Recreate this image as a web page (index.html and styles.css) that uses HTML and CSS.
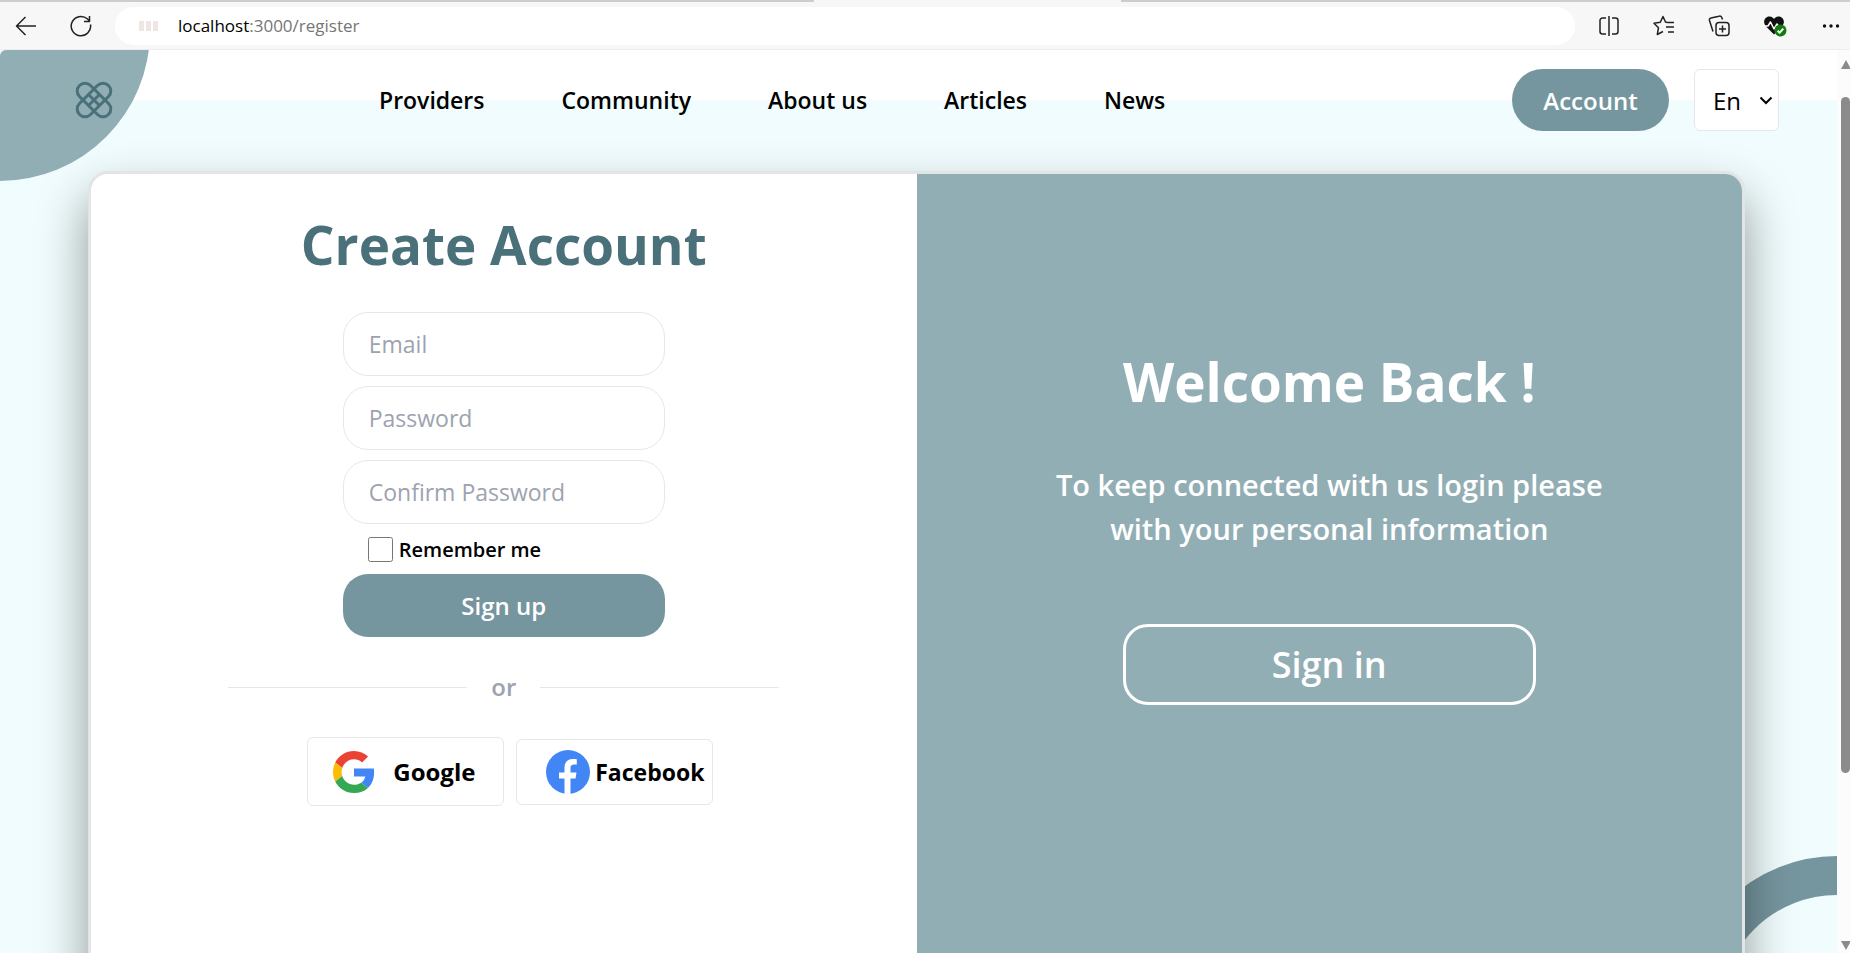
FILE: index.html
```html
<!DOCTYPE html>
<html lang="en">
<head>
  <meta charset="UTF-8">
  <meta name="viewport" content="width=device-width, initial-scale=1.0">
  <title>Register</title>
  <link rel="stylesheet" href="styles.css">
</head>
<body>
  <!-- browser bar -->
  <div class="toolbar">
    <div class="tab"></div>
    <button class="tool" aria-label="Back">
      <svg width="22" height="22" viewBox="0 0 22 22"><path d="M21 11H1.500M10.500 2L1.500 11l9 9"/></svg>
    </button>
    <button class="tool" aria-label="Reload">
      <svg width="22" height="22" viewBox="0 0 22 22"><path d="M20.500 9.500a9.700 9.700 0 1 1-3.200-5.700L19.500 6M19.500 1v5.500h-5.500"/></svg>
    </button>
    <div class="address">
      <span class="favicon" aria-hidden="true"><i></i><i></i><i></i></span>
      <span class="url">localhost<span class="path">:3000/register</span></span>
    </div>
    <div class="tools">
      <button class="tool" aria-label="Split screen">
        <svg width="22" height="22" viewBox="0 0 22 22"><path d="M8 3H4.500A2.500 2.500 0 0 0 2 5.500v11A2.500 2.500 0 0 0 4.500 19H8M14 3h3.500A2.500 2.500 0 0 1 20 5.500v11a2.500 2.500 0 0 1-2.500 2.500H14M11 1v20"/></svg>
      </button>
      <button class="tool" aria-label="Favorites">
        <svg width="22" height="22" viewBox="0 0 22 22"><path d="M14.500 7.500L12.500 7 10 1.500 7.300 7.200 1 8.200l4.500 4.500L4.300 19.500 10 16.500M14.500 7.500H21M13 12h8M15 17h6"/></svg>
      </button>
      <button class="tool" aria-label="Collections">
        <svg width="22" height="22" viewBox="0 0 22 22"><rect x="8" y="7.500" width="13" height="13" rx="3"/><path d="M14.500 10.500v7M11 14h7M5 16.500L1.500 5.500Q1 3.500 3 3L11 1.200q2-.5 2.800 1.300l.7 2"/></svg>
      </button>
      <button class="tool" aria-label="Browser essentials">
        <svg width="24" height="22" viewBox="0 0 24 22"><path class="solid" d="M11 19.500L3 11.500C-1.500 6 3 1 6.500 1.500 9 1.500 10.500 3 11 4c.5-1 2-2.500 4.500-2.500C19 1 23.500 6 19 11.500z"/><path class="pulse" d="M0 11h5l2.500-4 3.500 7 3-5 2 3h5"/><circle class="ok" cx="17.500" cy="15.500" r="6"/><path class="tick" d="M14.700 15.700l2 2 3.600-4"/></svg>
      </button>
      <button class="tool" aria-label="Settings and more">
        <svg width="22" height="22" viewBox="0 0 22 22"><g class="solid"><circle cx="4.500" cy="11" r="1.700"/><circle cx="11" cy="11" r="1.700"/><circle cx="17.500" cy="11" r="1.700"/></g></svg>
      </button>
    </div>
  </div>

  <div class="window">
    <div class="page">
      <div class="circle"></div>
      <div class="ring"></div>

      <header class="header">
        <a class="logo" href="#" aria-label="Home">
          <svg width="38" height="38" viewBox="0 0 38 38">
            <rect x="11.200" y="-1.500" width="15.600" height="41" rx="7.800" transform="rotate(45 19 19)"/>
            <rect x="11.200" y="-1.500" width="15.600" height="41" rx="7.800" transform="rotate(-45 19 19)"/>
            <path d="M13.500 13.500l11 11M24.500 13.500l-11 11"/>
          </svg>
        </a>
        <nav class="nav">
          <a href="#">Providers</a>
          <a href="#">Community</a>
          <a href="#">About us</a>
          <a href="#">Articles</a>
          <a href="#">News</a>
        </nav>
        <div class="actions">
          <button class="account">Account</button>
          <div class="language">
            <select aria-label="Language">
              <option>En</option>
              <option>Ar</option>
            </select>
            <svg width="14" height="9" viewBox="0 0 14 9"><path d="M1.500 1.500L7 7l5.500-5.500"/></svg>
          </div>
        </div>
      </header>

      <main class="card">
        <section class="signup">
          <h1>Create Account</h1>
          <form class="form">
            <input class="field" type="email" placeholder="Email" aria-label="Email">
            <input class="field" type="password" placeholder="Password" aria-label="Password">
            <input class="field" type="password" placeholder="Confirm Password" aria-label="Confirm Password">
            <div class="remember">
              <input type="checkbox" id="remember">
              <label for="remember">Remember me</label>
            </div>
            <button class="submit" type="button">Sign up</button>
          </form>
          <div class="divider">or</div>
          <div class="social">
            <button class="google">
              <svg width="42" height="42" viewBox="0 0 48 48">
                <path fill="#ea4335" d="M24 9.500c3.540 0 6.710 1.220 9.210 3.600l6.850-6.850C35.900 2.380 30.470 0 24 0 14.620 0 6.510 5.380 2.560 13.220l7.980 6.190C12.430 13.720 17.740 9.500 24 9.500z"/>
                <path fill="#4285f4" d="M46.980 24.550c0-1.570-.15-3.090-.38-4.550H24v9.020h12.940c-.58 2.960-2.260 5.480-4.780 7.180l7.730 6c4.510-4.180 7.090-10.360 7.090-17.650z"/>
                <path fill="#fbbc05" d="M10.530 28.590c-.48-1.450-.76-2.990-.76-4.590s.27-3.140.76-4.590l-7.980-6.190C.92 16.460 0 20.120 0 24c0 3.880.92 7.540 2.560 10.780l7.970-6.190z"/>
                <path fill="#34a853" d="M24 48c6.480 0 11.930-2.130 15.890-5.810l-7.730-6c-2.150 1.450-4.920 2.300-8.160 2.300-6.260 0-11.570-4.220-13.470-9.910l-7.980 6.190C6.510 42.620 14.620 48 24 48z"/>
              </svg>
              Google
            </button>
            <button class="facebook">
              <svg width="44" height="44" viewBox="0 0 44 44">
                <circle cx="22" cy="22" r="22" fill="#4285f4"/>
                <path fill="#fff" d="M18.500 44V28.500H13V22.500h5.500v-4.500c0-6 3.200-9 8.300-9 1.600 0 3 .1 4 .3v5.200h-2.600c-2.800 0-3.700 1.400-3.700 3.500v4.500h6l-1 6h-5V44z"/>
              </svg>
              Facebook
            </button>
          </div>
        </section>
        <section class="welcome">
          <h2>Welcome Back !</h2>
          <p>To keep connected with us login please with your personal information</p>
          <button class="signin">Sign in</button>
        </section>
      </main>
    </div>

    <div class="scrollbar" aria-hidden="true">
      <div class="arrow-up"></div>
      <div class="thumb"></div>
      <div class="arrow-down"></div>
    </div>
  </div>
</body>
</html>
```
FILE: styles.css
```css
* {
  box-sizing: border-box;
}

body {
  margin: 0;
  height: 100vh;
  display: flex;
  flex-direction: column;
  overflow: hidden;
  background: #f7f7f7;
  color: #000;
  font-family: "Segoe UI", "Open Sans", "Noto Sans", sans-serif;
  font-size: 24px;
}

button, input, select {
  font-family: inherit;
  font-size: inherit;
  color: inherit;
}

button {
  padding: 0;
  border: none;
  background: none;
  cursor: pointer;
}

a {
  color: inherit;
  text-decoration: none;
}

/* browser bar */
.toolbar {
  position: relative;
  flex: none;
  display: flex;
  align-items: center;
  height: 50px;
  padding: 0 8px 0 15px;
  gap: 33px;
  border-top: 2px solid #cdcdcd;
  border-bottom: 1px solid #ededed;
}

.tab {
  position: absolute;
  top: -2px;
  left: 44%;
  width: 307px;
  height: 2px;
  background: #f7f7f7;
}

.tool {
  display: flex;
}

.tool svg {
  fill: none;
  stroke: #222;
  stroke-width: 1.5;
  stroke-linejoin: round;
}

.tool .solid {
  fill: #111;
  stroke: none;
}

.tool .pulse {
  stroke: #fff;
}

.tool .ok {
  fill: #107c10;
  stroke: none;
}

.tool .tick {
  stroke: #fff;
  stroke-width: 2;
}

.address {
  flex: 1;
  display: flex;
  align-items: center;
  gap: 20px;
  height: 38px;
  margin: 0 -10px;
  padding-left: 24px;
  border-radius: 19px;
  background: #fff;
  font-size: 17px;
}

.favicon {
  display: flex;
  gap: 2px;
}

.favicon i {
  width: 5px;
  height: 10px;
  background: #eee6e2;
}

.path {
  color: #767676;
}

.tools {
  display: flex;
  gap: 33px;
}

/* page */
.window {
  flex: 1;
  display: flex;
  min-height: 0;
}

.page {
  position: relative;
  flex: 1;
  overflow: hidden;
  border-top-left-radius: 6px;
  background: #f0fcfd;
}

.circle {
  position: absolute;
  top: -169px;
  left: -150px;
  z-index: 1;
  width: 300px;
  height: 300px;
  border-radius: 50%;
  background: #92aeb5;
}

.ring {
  position: absolute;
  right: -156px;
  bottom: -215px;
  width: 312px;
  height: 312px;
  border: 39px solid #76969f;
  border-radius: 50%;
}

.header {
  display: flex;
  align-items: center;
  height: 100px;
  padding: 0 58px 0 75px;
  background: linear-gradient(#fff 50%, transparent 50%);
}

.logo {
  position: relative;
  z-index: 2;
  display: flex;
}

.logo svg {
  fill: none;
  stroke: #4a7079;
  stroke-width: 3;
}

.nav {
  display: flex;
  gap: 77px;
  margin-left: 266px;
  font-size: 23px;
  font-weight: 600;
}

.actions {
  display: flex;
  gap: 25px;
  margin-left: auto;
}

.account {
  width: 157px;
  height: 62px;
  border-radius: 31px;
  background: #76969f;
  color: #fff;
  font-weight: 600;
}

.language {
  position: relative;
}

.language select {
  appearance: none;
  width: 85px;
  height: 62px;
  padding: 0 18px;
  border: 1px solid #e5e7eb;
  border-radius: 6px;
  background: #fff;
}

.language svg {
  position: absolute;
  top: 27px;
  right: 6px;
  fill: none;
  stroke: #000;
  stroke-width: 2;
  pointer-events: none;
}

/* card */
.card {
  position: relative;
  display: grid;
  grid-template-columns: 1fr 1fr;
  min-height: 900px;
  margin: 21px 92px 0 88px;
  border: 3px solid #e2e4e5;
  border-radius: 20px;
  background: #fff;
  box-shadow: 0 25px 50px rgba(0, 0, 0, 0.4);
}

.signup {
  display: flex;
  flex-direction: column;
  align-items: center;
  padding-top: 36px;
}

h1, h2 {
  margin: 0;
  font-size: 53px;
  line-height: 70px;
  font-weight: 700;
}

h1 {
  color: #4a7079;
}

.form {
  display: flex;
  flex-direction: column;
  gap: 10px;
  width: 322px;
  margin-top: 32px;
}

.field {
  height: 64px;
  padding: 0 25px;
  border: 1px solid #e5e7eb;
  border-radius: 25px;
  background: #fff;
  font-size: 23px;
}

.field::placeholder {
  color: #9ca3af;
}

.remember {
  display: flex;
  align-items: center;
  gap: 6px;
  height: 30px;
  padding-left: 25px;
  font-size: 20px;
  font-weight: 600;
}

.remember input {
  width: 25px;
  height: 25px;
  margin: 0;
}

.submit {
  height: 63px;
  border-radius: 25px;
  background: #76969f;
  color: #fff;
  font-weight: 600;
}

.divider {
  display: flex;
  align-items: center;
  gap: 24px;
  width: 551px;
  margin-top: 32px;
  color: #9ca3af;
  font-weight: 600;
  line-height: 36px;
}

.divider::before,
.divider::after {
  content: "";
  flex: 1;
  height: 1px;
  background: #e5e7eb;
}

.social {
  display: flex;
  align-items: center;
  gap: 12px;
  margin-top: 32px;
  padding-left: 13px;
}

.social button {
  display: flex;
  align-items: center;
  width: 197px;
  height: 69px;
  border: 1px solid #e5e7eb;
  border-radius: 6px;
  font-weight: 700;
}

.social .google {
  gap: 18px;
  padding-left: 25px;
}

.social .facebook {
  gap: 5px;
  height: 66px;
  padding-left: 29px;
  font-size: 23px;
}

.welcome {
  display: flex;
  flex-direction: column;
  align-items: center;
  padding-top: 173px;
  border-top-right-radius: 17px;
  background: #92aeb5;
  color: #fff;
  text-align: center;
}

.welcome p {
  width: 600px;
  margin: 46px 0 0;
  font-size: 29px;
  line-height: 44px;
  font-weight: 600;
}

.signin {
  width: 413px;
  height: 81px;
  margin-top: 73px;
  border: 3px solid #fff;
  border-radius: 25px;
  font-size: 36px;
  font-weight: 600;
}

/* scrollbar */
.scrollbar {
  display: flex;
  flex-direction: column;
  width: 13px;
  padding: 10px 0 3px 4px;
  background: #fcfcfc;
}

.arrow-up, .arrow-down {
  border: 5px solid transparent;
  border-top: none;
  border-bottom: 9px solid #8b8b8b;
}

.arrow-down {
  margin-top: auto;
  border-top: 9px solid #8b8b8b;
  border-bottom: none;
}

.thumb {
  height: 76%;
  margin-top: 28px;
  border-radius: 5px;
  background: #8b8b8b;
}
```
